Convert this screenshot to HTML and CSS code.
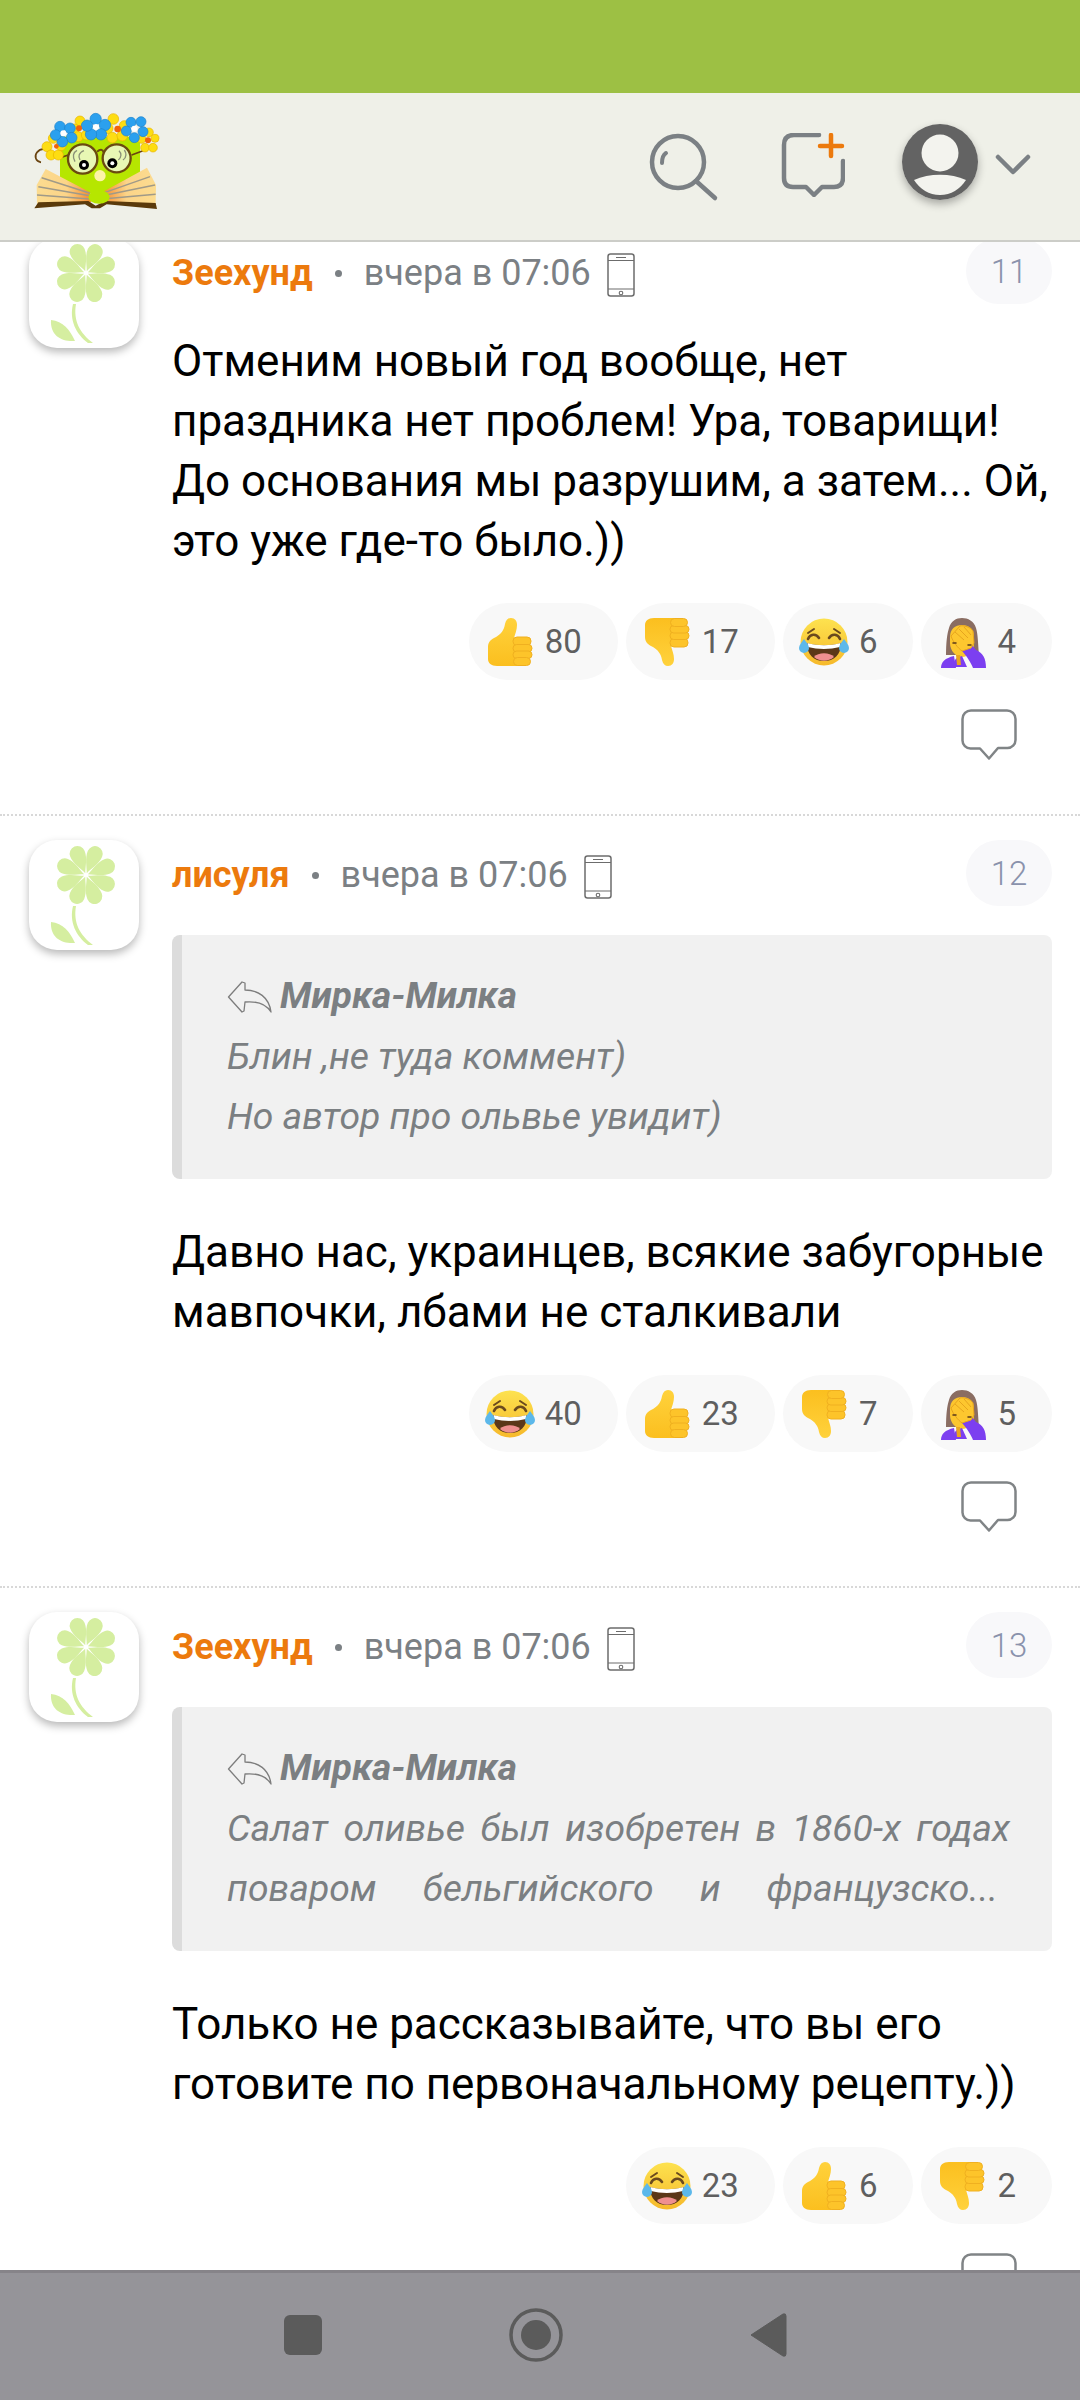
FILE: index.html
```html
<!DOCTYPE html>
<html lang="ru">
<head>
<meta charset="utf-8">
<title>Комментарии</title>
<link rel="stylesheet" href="styles.css">
</head>
<body>
<svg class="defs" width="0" height="0" aria-hidden="true">
  <defs>
    <linearGradient id="gThumb" x1="0" y1="0" x2="0" y2="1"><stop offset="0" stop-color="#ffd23c"/><stop offset="1" stop-color="#fbbf1f"/></linearGradient>
    <linearGradient id="gFace" x1="0" y1="0" x2="0" y2="1"><stop offset="0" stop-color="#fde24f"/><stop offset="1" stop-color="#f6b92b"/></linearGradient>
    <linearGradient id="gPageL" x1="0" y1="0" x2="1" y2="0"><stop offset="0" stop-color="#fcdc90"/><stop offset=".55" stop-color="#fcd488"/><stop offset="1" stop-color="#f58a2c"/></linearGradient>
    <linearGradient id="gPageR" x1="1" y1="0" x2="0" y2="0"><stop offset="0" stop-color="#fcdc90"/><stop offset=".55" stop-color="#fcd488"/><stop offset="1" stop-color="#f58a2c"/></linearGradient>
    <symbol id="thumb" viewBox="0 0 54 54">
      <path d="M5 32C5 26 9 24 13 22 18 19 21 15 22 9 23 5 25 3 28 3c4 0 6 3 6 7 0 5-2 9-3 13l8 28H14C8 51 5 48 5 44Z" fill="url(#gThumb)"/>
      <g fill="#fdc42a" stroke="#f0b020" stroke-width="1">
        <rect x="30" y="22" width="18" height="8.5" rx="4"/>
        <rect x="30" y="29.5" width="19" height="7.5" rx="3.7"/>
        <rect x="30" y="36" width="19" height="7.5" rx="3.7"/>
        <rect x="30.5" y="42.5" width="17" height="8" rx="4"/>
      </g>
    </symbol>
    <symbol id="laugh" viewBox="0 0 54 54">
      <circle cx="27" cy="27" r="23.5" fill="url(#gFace)"/>
      <path d="M11 24c2-5 8-6 11-1M32 23c3-5 9-4 11 1" fill="none" stroke="#6b4a1e" stroke-width="2.6" stroke-linecap="round"/>
      <path d="M11 18l6-4M43 18l-6-4" fill="none" stroke="#6b4a1e" stroke-width="2" stroke-linecap="round"/>
      <path d="M10 28c10 3 24 3 34 0 0 12-7 18-17 18S10 40 10 28Z" fill="#5b3718"/>
      <path d="M10.500 28c10 3 23 3 33 0l-.6 4c-10 2.500-22 2.500-32 0Z" fill="#fff"/>
      <path d="M17 42c4-5 16-5 20 0-6 5-14 5-20 0Z" fill="#ef8f8f"/>
      <path d="M7 24c2 3 5 6 5 9a5 5 0 0 1-10 0c0-3 3-6 5-9Z" fill="#5cb8ea"/>
      <path d="M47 24c-2 3-5 6-5 9a5 5 0 0 0 10 0c0-3-3-6-5-9Z" fill="#5cb8ea"/>
    </symbol>
    <symbol id="facepalm" viewBox="0 0 54 54">
      <path d="M11 40C11 28 12 19 14 13 16 6 21 3 27 3s12 3 14 10c2 6 2 16 3 27Z" fill="#8a6d62"/>
      <path d="M15 22c0-8 5-12 12-12s12 4 12 12v6c0 8-6 14-12 14s-12-6-12-14Z" fill="#fcc62e"/>
      <path d="M19 52c0-6 0-9 8-11l5 11Z" fill="#7c3ff0"/>
      <path d="M6 53c0-6 4-10 13-12l2 12Z" fill="#7c3ff0"/>
      <path d="M38 53c-2-5-6-12-12-18l10-6 5 6c7 3 10 8 10 18Z" fill="#7c3ff0"/>
      <path d="M21 40l4 0 1 10-4 0Z" fill="#eaa520"/>
      <path d="M16 21l9-10c3-1 11 1 13 5l1 12-3 5-9 3c-4-3-9-9-11-15Z" fill="#fdc72f" stroke="#e6a51e" stroke-width="1"/>
      <path d="M20 17l9 8M24 14l9 9M29 12l7 8" fill="none" stroke="#e6a51e" stroke-width="1"/>
      <path d="M18 28h3M33 30h3" stroke="#5b3b1a" stroke-width="1.500" stroke-linecap="round"/>
    </symbol>
    <symbol id="flower" viewBox="0 0 110 110">
      <g fill="#d5eea0">
        <path id="petal" d="M57 33C54.500 27 49.250 20 49.250 12a7.750 7.750 0 0 1 15.500 0C64.750 20 59.500 27 57 33Z" transform="rotate(-22 57 35)"/>
        <use href="#petal" transform="rotate(45 57 35)"/>
        <use href="#petal" transform="rotate(90 57 35)"/>
        <use href="#petal" transform="rotate(135 57 35)"/>
        <use href="#petal" transform="rotate(180 57 35)"/>
        <use href="#petal" transform="rotate(225 57 35)"/>
        <use href="#petal" transform="rotate(270 57 35)"/>
        <use href="#petal" transform="rotate(315 57 35)"/>
      </g>
      <path d="M47 66c-3 17 4 29 17 39h-5C47 96 40 82 44 66Z" fill="#d5eea0"/>
      <path d="M22 82c12 1 19 10 24 21-13 1-25-5-24-21Z" fill="#d5eea0"/>
    </symbol>
    <symbol id="phone" viewBox="0 0 28 44">
      <rect x="1" y="1" width="26" height="42" rx="2.500" fill="none" stroke="#6c6c6c" stroke-width="1.500"/>
      <path d="M1 7.500h26M1 36h26M9 4.500h10" fill="none" stroke="#6c6c6c" stroke-width="1.200"/>
      <circle cx="14" cy="40" r="1.800" fill="none" stroke="#6c6c6c" stroke-width="1.100"/>
    </symbol>
    <symbol id="bubble" viewBox="0 0 56 51">
      <path d="M10 1.500h36a8.500 8.500 0 0 1 8.500 8.500v21a8 8 0 0 1-8 8H37L28 49.500 19 39.500H9.500a8 8 0 0 1-8-8V10A8.500 8.500 0 0 1 10 1.500Z" fill="none" stroke="#808486" stroke-width="2.500" stroke-linejoin="round"/>
    </symbol>
    <symbol id="reply" viewBox="0 0 45 33">
      <path d="M1.500 17 15 2l3 1v7c13 0 24 7 26 22-5-8-15-11-26-10l-1 9-2 1Z" fill="none" stroke="#7d7d7d" stroke-width="1.300" stroke-linejoin="round"/>
    </symbol>
  </defs>
</svg>

<div class="page">
  <div class="status-bar"></div>

  <header class="app-header">
    <svg class="logo" viewBox="0 0 420 330" aria-label="Логотип">
      <g id="logo-art">
        <rect x="105" y="95" width="240" height="170" fill="#b6e600"/>
        <path d="M130 150C105 160 90 160 78 146 66 130 48 128 36 142c-9 12-4 28 12 30" fill="none" stroke="#6a4410" stroke-width="5"/>
        <path d="M320 150l40-15" stroke="#6a4410" stroke-width="5"/>
        <path d="M35 240 62 192 195 262 198 292 36 296Z" fill="url(#gPageL)"/>
        <path d="M393 240 366 188 232 262 232 292 392 296Z" fill="url(#gPageR)"/>
        <path d="M50 218 195 265M40 245 195 272M36 270 195 282M375 215 232 265M390 240 232 272M392 268 232 282" stroke="#a09a88" stroke-width="4.500" fill="none"/>
        <path d="M28 310 40 292 190 288 212 302 240 288 392 294 396 312 245 298 225 310 200 310 180 298Z" fill="#5a3a0b"/>
        <ellipse cx="222" cy="276" rx="32" ry="20" fill="#b6e600"/>
        <circle cx="225" cy="212" r="17" fill="#fdf3a8"/>
        <g fill="#e8f7b4" stroke="#6a4a10" stroke-width="7">
          <circle cx="173" cy="162" r="44"/>
          <circle cx="275" cy="160" r="42"/>
        </g>
        <path d="M216 140q15-12 20 2" fill="none" stroke="#6a4a10" stroke-width="6"/>
        <path d="M150 170c-8-15-6-28 6-34M165 165c-6-10-4-22 12-28M280 165c10-8 10-20 2-28M294 165c12-8 10-22 4-30" fill="none" stroke="#8a9077" stroke-width="4"/>
        <circle cx="177" cy="180" r="15" fill="#000"/><circle cx="177" cy="180" r="6" fill="#fff"/>
        <circle cx="262" cy="175" r="15" fill="#000"/><circle cx="262" cy="175" r="6" fill="#fff"/>
        <g fill="#fddd12" stroke="#e8b400" stroke-width="2">
          <circle cx="85" cy="100" r="15"/><circle cx="66" cy="125" r="15"/><circle cx="78" cy="150" r="15"/><circle cx="100" cy="150" r="15"/><circle cx="108" cy="122" r="15"/>
          <circle cx="165" cy="48" r="15"/><circle cx="148" cy="72" r="15"/><circle cx="160" cy="95" r="15"/><circle cx="184" cy="90" r="15"/><circle cx="185" cy="62" r="14"/>
          <circle cx="265" cy="42" r="16"/><circle cx="248" cy="70" r="16"/><circle cx="262" cy="98" r="16"/><circle cx="292" cy="92" r="16"/><circle cx="298" cy="62" r="15"/>
          <circle cx="372" cy="82" r="13"/><circle cx="350" cy="102" r="13"/><circle cx="360" cy="128" r="13"/><circle cx="384" cy="128" r="13"/><circle cx="390" cy="100" r="12"/>
        </g>
        <g fill="#2ba0ee" stroke="#1b82cc" stroke-width="2">
          <circle cx="105" cy="65" r="16"/><circle cx="135" cy="70" r="16"/><circle cx="140" cy="98" r="16"/><circle cx="112" cy="110" r="16"/><circle cx="92" cy="90" r="16"/>
          <circle cx="212" cy="42" r="17"/><circle cx="240" cy="60" r="17"/><circle cx="228" cy="88" r="17"/><circle cx="198" cy="88" r="17"/><circle cx="186" cy="62" r="17"/>
          <circle cx="318" cy="52" r="15"/><circle cx="348" cy="50" r="15"/><circle cx="354" cy="80" r="15"/><circle cx="328" cy="98" r="15"/><circle cx="304" cy="78" r="15"/>
        </g>
        <circle cx="115" cy="85" r="9" fill="#fff"/><circle cx="213" cy="66" r="9" fill="#fff"/><circle cx="328" cy="71" r="9" fill="#fff"/>
        <circle cx="162" cy="70" r="9" fill="#f2600a"/><circle cx="278" cy="72" r="10" fill="#f2600a"/><circle cx="369" cy="106" r="9" fill="#f2600a"/><circle cx="94" cy="124" r="7" fill="#f2600a"/>
      </g>
    </svg>
    <div class="header-actions">
      <svg class="icon-search" viewBox="0 0 76 76" aria-label="Поиск">
        <circle cx="34" cy="29" r="26" fill="none" stroke="#7b8084" stroke-width="4.500"/>
        <path d="M52 48 71 65" fill="none" stroke="#7b8084" stroke-width="4.500" stroke-linecap="round"/>
        <path d="M18 30c0-4 1-8 4-10" fill="none" stroke="#7b8084" stroke-width="4" stroke-linecap="round"/>
      </svg>
      <svg class="icon-add" viewBox="0 0 64 64" aria-label="Новая тема">
        <path d="M38 2H13Q3 2 3 12v33q0 9 9 9h13l8 8 8-8h12q9 0 9-9V28" fill="none" stroke="#7b8084" stroke-width="4.500" stroke-linecap="round" stroke-linejoin="round"/>
        <path d="M50 2v21M39 13h22" fill="none" stroke="#ec7a0d" stroke-width="4.500" stroke-linecap="round"/>
      </svg>
      <div class="user-circle">
        <svg viewBox="0 0 76 76" aria-label="Профиль">
          <circle cx="38" cy="38" r="38" fill="#636363"/>
          <circle cx="38" cy="29" r="18.500" fill="#f3f3ee"/>
          <path d="M12 56c15-7 37-7 52 0-6 9-15 15-26 15S18 65 12 56Z" fill="#f3f3ee"/>
        </svg>
      </div>
      <svg class="icon-chevron" viewBox="0 0 36 22" aria-label="Меню">
        <path d="M3 3 18 18 33 3" fill="none" stroke="#7b8084" stroke-width="4.500" stroke-linecap="round" stroke-linejoin="round"/>
      </svg>
    </div>
  </header>

  <main class="feed">
    <div class="feed-inner">

      <article class="comment comment-first">
        <svg class="avatar"><use href="#flower"/></svg>
        <div class="comment-body">
          <div class="meta">
            <span class="author">Зеехунд</span>
            <span class="dot"></span>
            <span class="date">вчера в 07:06</span>
            <svg class="phone"><use href="#phone"/></svg>
            <span class="num">11</span>
          </div>
          <p class="text">Отменим новый год вообще, нет праздника нет проблем! Ура, товарищи! До основания мы разрушим, а затем... Ой, это уже где-то было.))</p>
          <div class="chips">
            <span class="chip"><svg class="emoji"><use href="#thumb"/></svg>80</span>
            <span class="chip"><svg class="emoji flip"><use href="#thumb"/></svg>17</span>
            <span class="chip"><svg class="emoji"><use href="#laugh"/></svg>6</span>
            <span class="chip"><svg class="emoji"><use href="#facepalm"/></svg>4</span>
          </div>
          <div class="actions"><svg class="bubble"><use href="#bubble"/></svg></div>
        </div>
      </article>

      <article class="comment">
        <svg class="avatar"><use href="#flower"/></svg>
        <div class="comment-body">
          <div class="meta">
            <span class="author">лисуля</span>
            <span class="dot"></span>
            <span class="date">вчера в 07:06</span>
            <svg class="phone"><use href="#phone"/></svg>
            <span class="num">12</span>
          </div>
          <blockquote class="quote">
            <div class="quote-author"><svg class="reply"><use href="#reply"/></svg>Мирка-Милка</div>
            <div class="quote-line">Блин ,не туда коммент)</div>
            <div class="quote-line">Но автор про ольвье увидит)</div>
          </blockquote>
          <p class="text after-quote">Давно нас, украинцев, всякие забугорные мавпочки, лбами не сталкивали</p>
          <div class="chips">
            <span class="chip"><svg class="emoji"><use href="#laugh"/></svg>40</span>
            <span class="chip"><svg class="emoji"><use href="#thumb"/></svg>23</span>
            <span class="chip"><svg class="emoji flip"><use href="#thumb"/></svg>7</span>
            <span class="chip"><svg class="emoji"><use href="#facepalm"/></svg>5</span>
          </div>
          <div class="actions"><svg class="bubble"><use href="#bubble"/></svg></div>
        </div>
      </article>

      <article class="comment">
        <svg class="avatar"><use href="#flower"/></svg>
        <div class="comment-body">
          <div class="meta">
            <span class="author">Зеехунд</span>
            <span class="dot"></span>
            <span class="date">вчера в 07:06</span>
            <svg class="phone"><use href="#phone"/></svg>
            <span class="num">13</span>
          </div>
          <blockquote class="quote">
            <div class="quote-author"><svg class="reply"><use href="#reply"/></svg>Мирка-Милка</div>
            <div class="quote-line justified">Салат оливье был изобретен в 1860-х годах</div>
            <div class="quote-line justified clipped">поваром бельгийского и французско...</div>
          </blockquote>
          <p class="text after-quote">Только не рассказывайте, что вы его готовите по первоначальному рецепту.))</p>
          <div class="chips">
            <span class="chip"><svg class="emoji"><use href="#laugh"/></svg>23</span>
            <span class="chip"><svg class="emoji"><use href="#thumb"/></svg>6</span>
            <span class="chip"><svg class="emoji flip"><use href="#thumb"/></svg>2</span>
          </div>
          <div class="actions"><svg class="bubble"><use href="#bubble"/></svg></div>
        </div>
      </article>

    </div>
  </main>

  <nav class="nav-bar">
    <svg class="nav-square" viewBox="0 0 38 40"><rect width="38" height="40" rx="6" fill="#5b5b5b"/></svg>
    <svg class="nav-circle" viewBox="0 0 54 54"><circle cx="27" cy="27" r="25" fill="none" stroke="#5b5b5b" stroke-width="3.500"/><circle cx="27" cy="27" r="15" fill="#5b5b5b"/></svg>
    <svg class="nav-back" viewBox="0 0 38 46"><path d="M2 23 34 2Q37 1 37 4V42Q37 45 34 44Z" fill="#5b5b5b" stroke="#5b5b5b" stroke-linejoin="round"/></svg>
  </nav>
</div>
</body>
</html>
```
FILE: styles.css
```css
* { box-sizing: border-box; }

html, body {
  margin: 0;
  padding: 0;
  background: #fff;
}

body {
  font-family: Roboto, "Noto Sans", sans-serif;
  color: #000;
}

.defs {
  position: absolute;
}

.page {
  width: 1080px;
  height: 2400px;
  display: flex;
  flex-direction: column;
  overflow: hidden;
}

.status-bar {
  height: 93px;
  flex: none;
  background: #9dc044;
}

.app-header {
  height: 149px;
  flex: none;
  display: flex;
  justify-content: space-between;
  padding: 12px 49px 0 25px;
  background: #eff0e8;
  border-bottom: 2px solid #cccdc8;
}

.logo {
  width: 140px;
  height: 110px;
}

.header-actions {
  display: flex;
  align-items: flex-start;
}

.icon-search {
  width: 76px;
  height: 76px;
  margin: 28px 0 0 0;
}

.icon-add {
  width: 64px;
  height: 64px;
  margin: 28px 0 0 61px;
}

.user-circle {
  width: 76px;
  height: 76px;
  margin: 19px 0 0 57px;
  border-radius: 50%;
  box-shadow: 0 4px 8px rgba(0, 0, 0, 0.3);
}

.user-circle svg {
  display: block;
  width: 76px;
  height: 76px;
}

.icon-chevron {
  width: 36px;
  height: 22px;
  margin: 49px 0 0 17px;
}

.feed {
  flex: 1;
  min-height: 0;
  overflow: hidden;
}

.feed-inner {
  margin-top: -28px;
}

.comment {
  display: flex;
  gap: 33px;
  padding: 24px 28px 54px 29px;
  border-bottom: 2px dotted #d8d8d8;
}

.avatar {
  width: 110px;
  height: 110px;
  flex: none;
  border-radius: 28px;
  background: #fff;
  box-shadow: 0 4px 8px rgba(0, 0, 0, 0.28);
}

.comment-body {
  flex: 1;
  min-width: 0;
}

.meta {
  height: 66px;
  display: flex;
  align-items: center;
}

.author {
  padding-top: 4px;
  font-size: 36px;
  font-weight: 700;
  color: #ec7a0d;
}

.dot {
  width: 7px;
  height: 7px;
  margin: 4px 22px 0 22px;
  border-radius: 50%;
  background: #7b8084;
}

.date {
  padding-top: 4px;
  font-size: 36px;
  color: #7b8084;
}

.phone {
  width: 28px;
  height: 44px;
  margin: 8px 0 0 16px;
}

.num {
  width: 86px;
  height: 66px;
  margin-left: auto;
  display: flex;
  align-items: center;
  justify-content: center;
  border-radius: 33px;
  background: #f8f8fa;
  color: #8a92ac;
  font-size: 33px;
  font-weight: 300;
}

.text {
  margin: 30px 0 0;
  font-size: 44px;
  line-height: 60px;
}

.comment-first .text {
  margin-top: 27px;
}

.text.after-quote {
  margin-top: 43px;
}

.quote {
  margin: 29px 0 0;
  height: 244px;
  padding: 31px 42px 0 45px;
  border-left: 10px solid #dcdcdc;
  border-radius: 8px;
  background: #f1f1f1;
  color: #7b7f82;
  font-size: 37.300px;
  font-style: italic;
  line-height: 60px;
}

.quote-author {
  display: flex;
  align-items: center;
  font-size: 37px;
  font-weight: 700;
}

.reply {
  width: 45px;
  height: 33px;
  margin-right: 8px;
  flex: none;
}

.justified {
  text-align: justify;
  text-align-last: justify;
}

.clipped {
  margin-right: 12px;
}

.chips {
  display: flex;
  justify-content: flex-end;
  gap: 8px;
  margin-top: 32px;
}

.after-quote + .chips {
  margin-top: 33px;
}

.chip {
  height: 77px;
  display: flex;
  align-items: center;
  gap: 8px;
  padding: 0 36px 0 14px;
  border-radius: 38.500px;
  background: #f8f8f8;
  color: #5f5f5f;
  font-size: 33px;
  font-weight: 400;
}

.emoji {
  width: 54px;
  height: 54px;
  flex: none;
}

.flip {
  transform: scaleY(-1);
}

.actions {
  display: flex;
  justify-content: flex-end;
  margin-top: 29px;
  padding-right: 35px;
}

.bubble {
  width: 56px;
  height: 51px;
  display: block;
}

.nav-bar {
  position: relative;
  z-index: 2;
  height: 130px;
  flex: none;
  border-top: 3px solid #868489;
  background: #959499;
}

.nav-square,
.nav-circle,
.nav-back {
  position: absolute;
}

.nav-square {
  left: 284px;
  top: 42px;
  width: 38px;
  height: 40px;
}

.nav-circle {
  left: 509px;
  top: 35px;
  width: 54px;
  height: 54px;
}

.nav-back {
  left: 749px;
  top: 39px;
  width: 38px;
  height: 46px;
}
```
